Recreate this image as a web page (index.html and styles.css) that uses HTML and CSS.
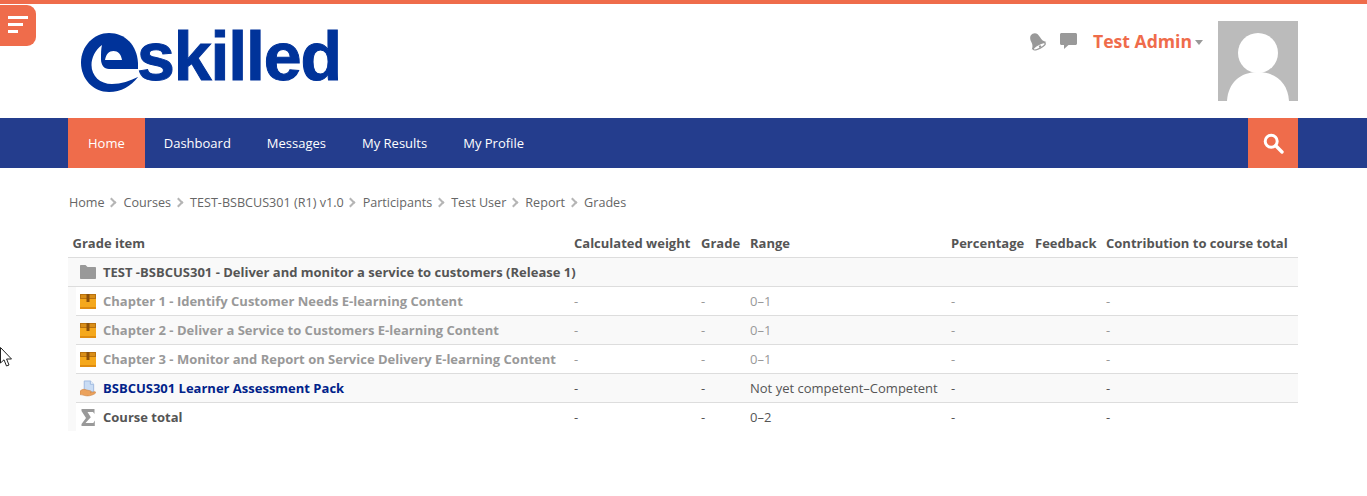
FILE: index.html
```html
<!DOCTYPE html>
<html lang="en">
<head>
  <meta charset="UTF-8" />
  <title>Grades</title>
  <link rel="stylesheet" href="styles.css">
</head>
<body>
  <svg width="0" height="0" class="defs">
    <symbol id="box" viewBox="0 0 16 15">
      <rect x="0" y="0" width="16" height="15" rx="1" fill="#f5a81c"/>
      <rect x="0" y="0" width="16" height="5" fill="#b9720f"/>
      <rect x="1" y="1" width="14" height="3" fill="#d98e18"/>
      <rect x="6.500" y="0" width="3" height="8" fill="#8a4f0a"/>
      <rect x="0" y="13" width="16" height="2" fill="#e08c10"/>
    </symbol>
  </svg>

  <button class="side-toggle" aria-label="Menu">
    <span class="bar bar-l"></span>
    <span class="bar bar-m"></span>
    <span class="bar bar-s"></span>
  </button>

  <!-- mouse pointer caught in the screenshot -->
  <svg class="pointer" width="13" height="21" viewBox="0 0 13 21">
    <path d="M0.5 0.5V16L4 12.8L6.5 19L9 18L6.6 12H11.5Z" fill="#fff" stroke="#222" stroke-width="1"/>
  </svg>

  <header class="top">
    <div class="wrap top-inner">
      <a class="logo" href="#">
        <svg class="logo-e" width="58" height="60" viewBox="0 0 58 60">
          <path d="M28 0C44 0 56 12 57 30V44C50 53 40 59 28 59C12 59 0 46 0 29.500C0 13 13 0 28 0Z" fill="#00339a"/>
          <path d="M21 12C14 17 10.500 25 10.500 32C10.500 43 19 51 31 51C40 51 49 48 58 43.500V36H28C23 36 20 32 20 26C20 20 20 16 21 12Z" fill="#fff"/>
          <path d="M24 27C25 21 28 18 32.500 18C37 18 40 21 41 27Z" fill="#fff"/>
        </svg>
        <span class="logo-text">skilled</span>
      </a>

      <div class="user-area">
        <svg class="ico-bell" width="16" height="17" viewBox="0 0 16 17">
          <g transform="rotate(-28 8 9) translate(8 9) scale(1.1) translate(-8 -9)">
            <path d="M8 .5C11 .5 12.500 3 12.500 6.500C12.500 9.500 13.500 11 15.500 13H.5C2.500 11 3.500 9.500 3.500 6.500C3.500 3 5 .5 8 .5Z" fill="#999"/>
            <ellipse cx="8" cy="13.500" rx="6" ry="1.800" fill="#fff" stroke="#999" stroke-width="1.200"/>
            <circle cx="8.500" cy="14" r="1.100" fill="#999"/>
          </g>
        </svg>
        <svg class="ico-chat" width="17" height="16" viewBox="0 0 17 16">
          <path d="M1.500 0H15.500C16.300 0 17 .7 17 1.500V10.500C17 11.300 16.300 12 15.500 12H8.500L4 16V12H1.500C.7 12 0 11.300 0 10.500V1.500C0 .7 .7 0 1.500 0Z" fill="#999"/>
        </svg>
        <a class="user-name" href="#">Test Admin</a>
        <span class="caret"></span>
        <svg class="avatar" width="80" height="80" viewBox="0 0 80 80">
          <rect width="80" height="80" fill="#bbb"/>
          <circle cx="40" cy="32" r="20" fill="#fff"/>
          <path d="M9 80C10 62 22 51 40 51C58 51 70 62 71 80Z" fill="#fff"/>
        </svg>
      </div>
    </div>
  </header>

  <nav class="navbar">
    <div class="wrap nav-inner">
      <a class="nav-link nav-active" href="#">Home</a>
      <a class="nav-link" href="#">Dashboard</a>
      <a class="nav-link" href="#">Messages</a>
      <a class="nav-link" href="#">My Results</a>
      <a class="nav-link" href="#">My Profile</a>
      <a class="nav-search" href="#" aria-label="Search">
        <svg width="21" height="21" viewBox="0 0 21 21">
          <circle cx="8.200" cy="8.200" r="6" fill="none" stroke="#fff" stroke-width="3"/>
          <path d="M12.800 12.800L19 19" stroke="#fff" stroke-width="3.400" stroke-linecap="round"/>
        </svg>
      </a>
    </div>
  </nav>

  <main class="wrap content">
    <ol class="crumbs">
      <li>Home</li>
      <li>Courses</li>
      <li>TEST-BSBCUS301 (R1) v1.0</li>
      <li>Participants</li>
      <li>Test User</li>
      <li>Report</li>
      <li>Grades</li>
    </ol>

    <table class="grades">
      <colgroup>
        <col class="c-indent"><col class="c-item"><col class="c-weight"><col class="c-grade">
        <col class="c-range"><col class="c-pct"><col class="c-feedback"><col class="c-contrib">
      </colgroup>
      <thead>
        <tr>
          <th colspan="2">Grade item</th>
          <th>Calculated weight</th>
          <th>Grade</th>
          <th>Range</th>
          <th>Percentage</th>
          <th>Feedback</th>
          <th>Contribution to course total</th>
        </tr>
      </thead>
      <tbody>
        <tr class="row-cat">
          <td colspan="8" class="cat-cell">
            <span class="item">
              <svg class="item-ico" width="16" height="14" viewBox="0 0 16 14">
                <path d="M0 1C0 .4 .4 0 1 0H5.500L7.500 2H15C15.600 2 16 2.400 16 3V13C16 13.600 15.600 14 15 14H1C.4 14 0 13.600 0 13Z" fill="#999"/>
              </svg>
              <b>TEST -BSBCUS301 - Deliver and monitor a service to customers (Release 1)</b>
            </span>
          </td>
        </tr>
        <tr class="row-dim">
          <td class="indent" rowspan="5"></td>
          <td><span class="item"><svg class="item-ico" width="16" height="15"><use href="#box"/></svg><b>Chapter 1 - Identify Customer Needs E-learning Content</b></span></td>
          <td>-</td><td>-</td><td>0–1</td><td>-</td><td></td><td>-</td>
        </tr>
        <tr class="row-dim row-alt">
          <td><span class="item"><svg class="item-ico" width="16" height="15"><use href="#box"/></svg><b>Chapter 2 - Deliver a Service to Customers E-learning Content</b></span></td>
          <td>-</td><td>-</td><td>0–1</td><td>-</td><td></td><td>-</td>
        </tr>
        <tr class="row-dim">
          <td><span class="item"><svg class="item-ico" width="16" height="15"><use href="#box"/></svg><b>Chapter 3 - Monitor and Report on Service Delivery E-learning Content</b></span></td>
          <td>-</td><td>-</td><td>0–1</td><td>-</td><td></td><td>-</td>
        </tr>
        <tr class="row-alt">
          <td><span class="item">
            <svg class="item-ico" width="17" height="17" viewBox="0 0 17 17">
              <path d="M4.500 .5H11L14.500 4V12H4.500Z" fill="#c9dcf4" stroke="#9db8de" stroke-width="1"/>
              <path d="M11 .5V4H14.500" fill="#eef4fc" stroke="#9db8de" stroke-width="1"/>
              <path d="M0 11.500C2 9 5 9 7 10L11 11C12.500 11.500 12.500 12.500 11 13L16 11.800C17 12.300 16.800 13.500 15.500 14.200C12 16.300 8 16.800 5 16C3 15.500 1.500 15 0 15Z" fill="#eba25c" stroke="#c97f3e" stroke-width=".6"/>
            </svg>
            <a class="item-link" href="#">BSBCUS301 Learner Assessment Pack</a></span></td>
          <td>-</td><td>-</td><td>Not yet competent–Competent</td><td>-</td><td></td><td>-</td>
        </tr>
        <tr>
          <td><span class="item">
            <svg class="item-ico" width="16" height="17" viewBox="0 0 16 17">
              <path d="M1.500 0H14.500V5L13 3H7.500L10.800 8.300L5.500 14H13.300L14.800 11.500V17H1.500V15L6 9L1.500 2Z" fill="#999"/>
            </svg>
            <b>Course total</b></span></td>
          <td>-</td><td>-</td><td>0–2</td><td>-</td><td></td><td>-</td>
        </tr>
      </tbody>
    </table>
  </main>
</body>
</html>
```

FILE: styles.css
```css
html, body {
  margin: 0;
  padding: 0;
  height: 100%;
  overflow: hidden;
}

body {
  background: #fff;
  color: #555;
  font-family: "Open Sans", "Liberation Sans", sans-serif;
  font-size: 13px;
  border-top: 4px solid #ef6c4b;
}

a {
  text-decoration: none;
}

.defs {
  position: absolute;
}

.wrap {
  width: 1230px;
  margin-left: 68px;
}

/* floating bits */
.side-toggle {
  position: absolute;
  top: 5px;
  left: 0;
  width: 36px;
  height: 41px;
  padding: 11px 0 0 8px;
  border: none;
  border-radius: 0 9px 9px 0;
  background: #ef6c4b;
  display: flex;
  flex-direction: column;
  gap: 4px;
}

.bar {
  display: block;
  height: 3px;
  background: #fff;
}
.bar-l { width: 20px; }
.bar-m { width: 15px; }
.bar-s { width: 10px; }

.pointer {
  position: absolute;
  top: 347px;
  left: 0;
}

/* header */
.top-inner {
  height: 114px;
  display: flex;
  justify-content: space-between;
}

.logo {
  display: flex;
  align-items: flex-start;
  padding: 29px 0 0 13px;
}

.logo-e {
  flex: none;
}

.logo-text {
  margin: -20px 0 0 -2px;
  color: #00339a;
  font-family: "Liberation Sans", Arial, sans-serif;
  font-size: 68px;
  font-weight: 700;
  line-height: 86px;
  letter-spacing: -1.1px;
  -webkit-text-stroke: 1px #00339a;
}

.user-area {
  display: flex;
  align-items: flex-start;
  padding-top: 17px;
}

.ico-bell {
  margin: 12px 15px 0 0;
  overflow: visible;
}

.ico-chat {
  margin: 12px 15px 0 0;
}

.user-name {
  color: #ef6c4b;
  font-size: 17.6px;
  font-weight: 700;
  line-height: 24px;
  margin: 8px 0 0 1px;
}

.caret {
  margin: 19px 15px 0 3px;
  border-top: 5px solid #999;
  border-left: 4.5px solid transparent;
  border-right: 4.5px solid transparent;
}

/* nav */
.navbar {
  background: #243d8d;
  height: 50px;
}

.nav-inner {
  display: flex;
  height: 50px;
}

.nav-link {
  padding: 0 17px 0 19px;
  color: #fff;
  line-height: 50px;
}

.nav-active {
  background: #ef6c4b;
  padding: 0 20px;
}

.nav-search {
  margin-left: auto;
  width: 50px;
  background: #ef6c4b;
  display: flex;
  align-items: center;
  justify-content: center;
}

/* breadcrumb */
.crumbs {
  list-style: none;
  margin: 0;
  padding: 26px 0 0 1px;
  height: 35px;
  display: flex;
  font-size: 12.6px;
  line-height: 18px;
  color: #666;
}

.crumbs li + li::before {
  content: "";
  display: inline-block;
  width: 5px;
  height: 5px;
  margin: 0 8.5px 1px 3.500px;
  border-top: 2px solid #b5b5b5;
  border-right: 2px solid #b5b5b5;
  transform: rotate(45deg);
}

/* grades table */
.grades {
  width: 1230px;
  margin-top: 0;
  border-collapse: collapse;
  table-layout: fixed;
}

.c-indent { width: 8px; }
.c-item { width: 494px; }
.c-weight { width: 127px; }
.c-grade { width: 49px; }
.c-range { width: 201px; }
.c-pct { width: 84px; }
.c-feedback { width: 71px; }
.c-contrib { width: 196px; }

.grades th {
  height: 28px;
  padding: 0 4px;
  text-align: left;
  font-weight: 700;
  white-space: nowrap;
  vertical-align: middle;
  border-bottom: 1px solid #ddd;
}

.grades th:first-child {
  padding-left: 4.5px;
}

.grades td {
  height: 28px;
  padding: 0 4px;
  white-space: nowrap;
  border-bottom: 1px solid #ddd;
}

.grades tbody tr:last-child td {
  border-bottom: none;
}

.grades .indent {
  padding: 0;
  background: #f9f9f9;
  border-bottom: none;
}

.row-cat td,
.row-alt td {
  background: #f9f9f9;
}

.row-dim td {
  color: #999;
}

.grades .cat-cell {
  padding-left: 12px;
}

.item {
  display: flex;
  align-items: center;
  gap: 7px;
}

.item-ico {
  flex: none;
  width: 16px;
}

.item-link {
  color: #00228a;
  font-weight: 700;
}
```
